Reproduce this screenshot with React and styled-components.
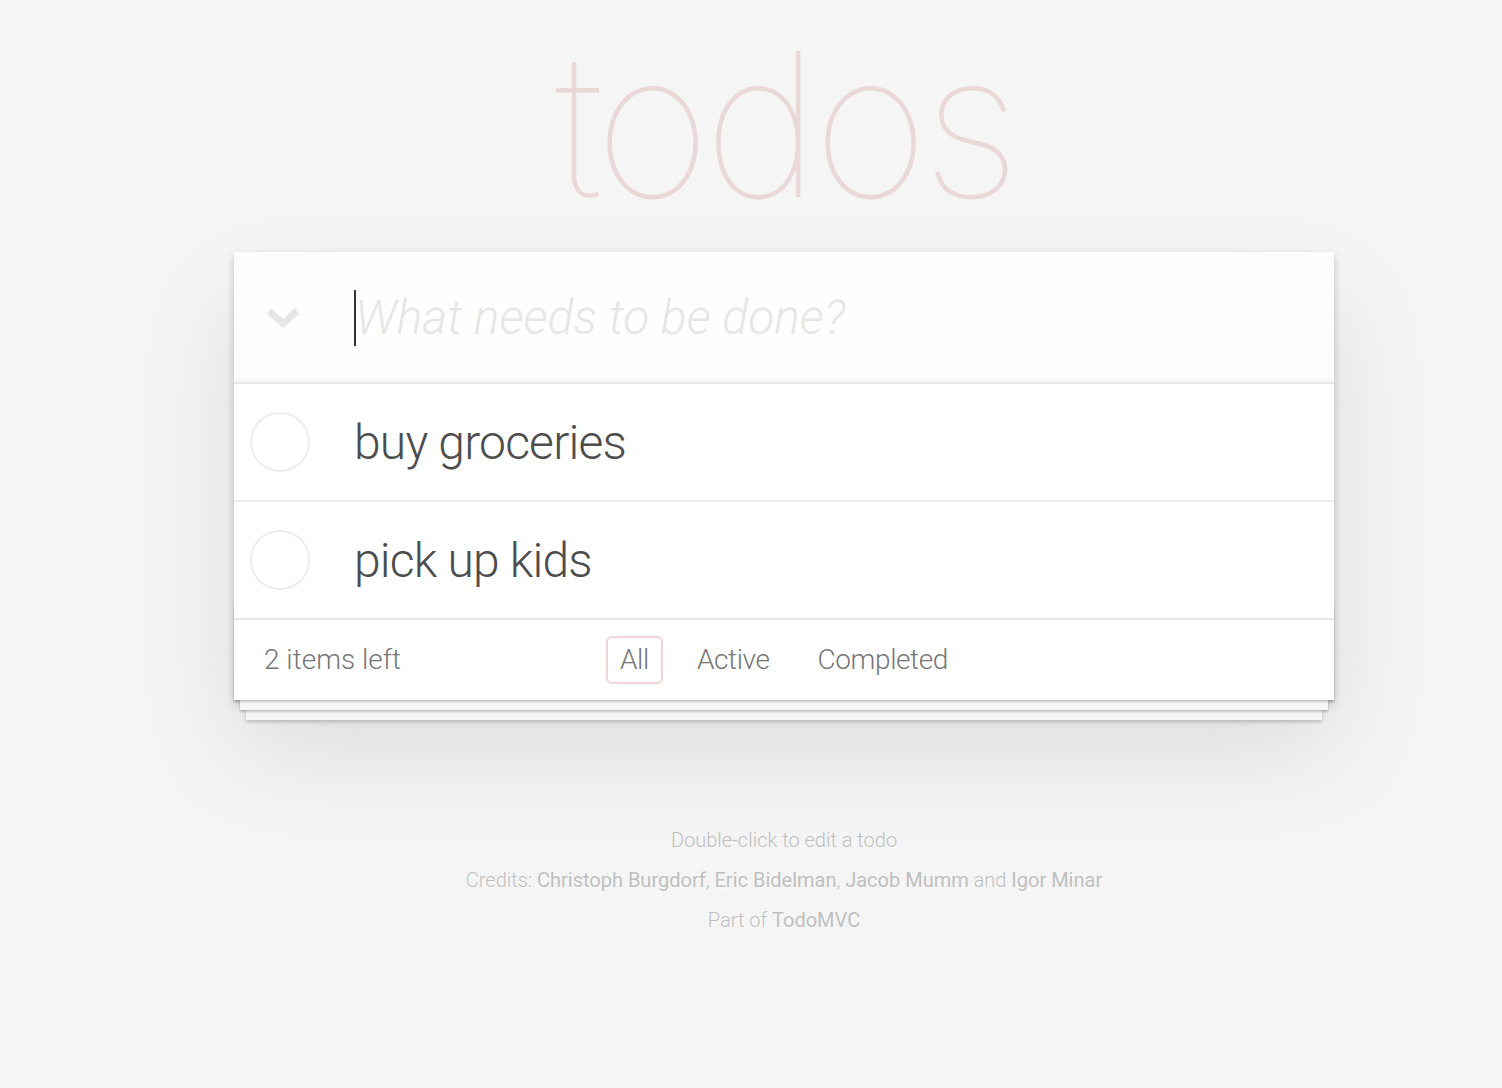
import React from "react";
import styled, { createGlobalStyle } from "styled-components";

const GlobalStyle = createGlobalStyle`
  body {
    margin: 0;
    background: #f5f5f5;
    color: #4d4d4d;
    font-family: Roboto, "Helvetica Neue", "Liberation Sans", sans-serif;
    font-weight: 300;
    font-size: 28px;
    line-height: 1.4em;
    -webkit-font-smoothing: antialiased;
  }
`;

const Page = styled.div`
  width: 1100px;
  margin: 0 0 0 234px;
  padding-top: 24px;
`;

const Title = styled.h1`
  margin: 0;
  height: 228px;
  font-family: Inter, "Helvetica Neue", sans-serif;
  font-size: 200px;
  line-height: 200px;
  font-weight: 100;
  text-align: center;
  color: rgba(175, 47, 47, 0.15);
  letter-spacing: -7px;
`;

const TodoApp = styled.section`
  position: relative;
  background: #fff;
  box-shadow: 0 4px 8px 0 rgba(0, 0, 0, 0.2), 0 50px 100px 0 rgba(0, 0, 0, 0.1);
`;

const Header = styled.header`
  display: flex;
  align-items: center;
  height: 130px;
  background: rgba(0, 0, 0, 0.003);
  box-shadow: inset 0 -4px 2px rgba(0, 0, 0, 0.03);
`;

const ToggleAll = styled.button`
  display: flex;
  align-items: center;
  justify-content: center;
  width: 120px;
  height: 100%;
  padding: 2px 22px 0 0;
  border: none;
  background: none;
  cursor: pointer;
`;

const InputWrap = styled.div`
  position: relative;
  flex: 1;
  height: 100%;
`;

const Caret = styled.span`
  position: absolute;
  left: 0;
  top: 38px;
  width: 2px;
  height: 56px;
  background: #333;
  pointer-events: none;
`;

const NewTodo = styled.input`
  box-sizing: border-box;
  width: 100%;
  height: 100%;
  margin: 0;
  padding: 0 32px 0 1px;
  border: none;
  outline: none;
  background: transparent;
  font-family: inherit;
  font-size: 48px;
  font-weight: 300;
  color: inherit;
  caret-color: transparent;

  &::placeholder {
    font-style: italic;
    font-weight: 300;
    color: #e6e6e6;
  }
`;

const Main = styled.section`
  position: relative;
  z-index: 2;
  border-top: 2px solid #e6e6e6;
`;

const TodoList = styled.ul`
  margin: 0;
  padding: 0;
  list-style: none;
`;

const TodoItem = styled.li`
  display: flex;
  align-items: center;
  height: 116px;
  font-size: 48px;
  border-bottom: ${(p) => (p.$last ? "none" : "2px solid #ededed")};
`;

const Toggle = styled.span`
  flex: none;
  box-sizing: border-box;
  width: 60px;
  height: 60px;
  margin: 0 44px 0 16px;
  border: 2px solid #ededed;
  border-radius: 50%;
`;

const Label = styled.label`
  padding: 2px 0 0;
  line-height: 1.2;
  letter-spacing: -0.8px;
  color: #4d4d4d;
`;

const Footer = styled.footer`
  display: grid;
  grid-template-columns: 1fr auto 1fr;
  align-items: center;
  height: 80px;
  padding: 0 30px;
  color: #777;
  border-top: 2px solid #e6e6e6;

  &::before {
    content: "";
    position: absolute;
    right: 0;
    bottom: 0;
    left: 0;
    height: 100px;
    overflow: hidden;
    box-shadow: 0 2px 2px rgba(0, 0, 0, 0.2), 0 16px 0 -6px #f6f6f6,
      0 18px 2px -6px rgba(0, 0, 0, 0.2), 0 32px 0 -12px #f6f6f6,
      0 34px 4px -12px rgba(0, 0, 0, 0.2);
  }
`;

const Count = styled.span`
  text-align: left;
`;

const Filters = styled.ul`
  position: relative;
  z-index: 1;
  display: flex;
  gap: 8px;
  margin: 0;
  padding: 0;
  list-style: none;
`;

const FilterLink = styled.a`
  display: block;
  margin: 6px;
  padding: 6px 12px;
  line-height: 32px;
  letter-spacing: -0.4px;
  color: inherit;
  text-decoration: none;
  border: 2px solid ${(p) => (p.$selected ? "rgba(175, 47, 47, 0.2)" : "transparent")};
  border-radius: 6px;
`;

const Info = styled.footer`
  margin: 130px auto 0;
  color: #bfbfbf;
  font-size: 20px;
  text-shadow: 0 2px 0 rgba(255, 255, 255, 0.5);
  text-align: center;

  p {
    margin: 20px 0;
    line-height: 1;
  }

  a {
    color: inherit;
    text-decoration: none;
    font-weight: 400;
  }
`;

const todos = ["buy groceries", "pick up kids"];

function Chevron() {
  return (
    <svg width="34" height="24" viewBox="0 0 34 24">
      <path d="M1 8 L5 2 L17 13 L29 2 L33 8 L17 22 Z" fill="#e6e6e6" />
    </svg>
  );
}

export default function App() {
  return (
    <>
      <GlobalStyle />
      <Page>
        <Title>todos</Title>
        <TodoApp>
          <Header>
            <ToggleAll aria-label="Mark all as complete">
              <Chevron />
            </ToggleAll>
            <InputWrap>
              <NewTodo placeholder="What needs to be done?" />
              <Caret />
            </InputWrap>
          </Header>
          <Main>
            <TodoList>
              {todos.map((t, i) => (
                <TodoItem key={t} $last={i === todos.length - 1}>
                  <Toggle />
                  <Label>{t}</Label>
                </TodoItem>
              ))}
            </TodoList>
          </Main>
          <Footer>
            <Count>2 items left</Count>
            <Filters>
              <li>
                <FilterLink href="#/" $selected>All</FilterLink>
              </li>
              <li>
                <FilterLink href="#/active">Active</FilterLink>
              </li>
              <li>
                <FilterLink href="#/completed">Completed</FilterLink>
              </li>
            </Filters>
            <span />
          </Footer>
        </TodoApp>
        <Info>
          <p>Double-click to edit a todo</p>
          <p>
            Credits: <a href="#">Christoph Burgdorf</a>, <a href="#">Eric Bidelman</a>,{" "}
            <a href="#">Jacob Mumm</a> and <a href="#">Igor Minar</a>
          </p>
          <p>
            Part of <a href="#">TodoMVC</a>
          </p>
        </Info>
      </Page>
    </>
  );
}
